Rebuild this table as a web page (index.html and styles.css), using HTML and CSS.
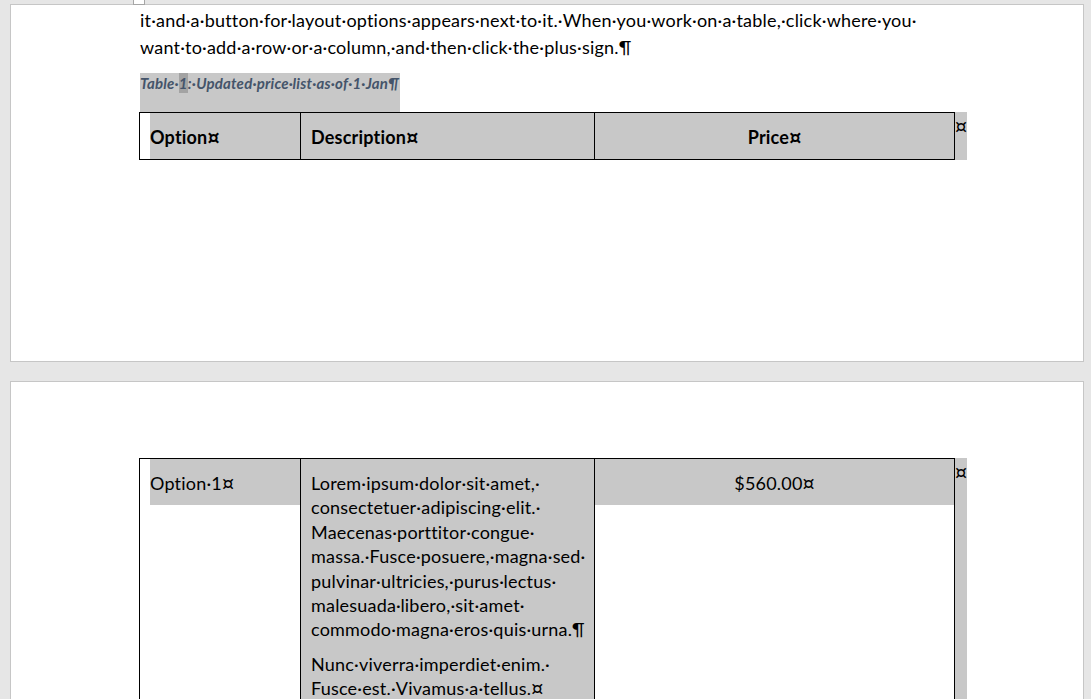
FILE: index.html
```html
<!DOCTYPE html>
<html lang="en">
<head>
<meta charset="utf-8">
<title>Document</title>
<link rel="stylesheet" href="styles.css">
</head>
<body>
<div class="crop-mark"></div>
<div class="page page-one">
  <p class="body-text">it·and·a·button·for·layout·options·appears·next·to·it.·When·you·work·on·a·table,·click·where·you·<br>want·to·add·a·row·or·a·column,·and·then·click·the·plus·sign.¶</p>
  <div class="caption">Table·<span class="field">1</span>:·Updated·price·list·as·of·1·Jan¶</div>
  <table class="price-table">
    <colgroup><col class="c1"><col class="c2"><col class="c3"><col class="c4"></colgroup>
    <tr class="head">
      <td class="cell-opt"><p class="sel">Option<span class="cm">¤</span></p></td>
      <td class="cell-desc"><p>Description<span class="cm">¤</span></p></td>
      <td class="cell-price"><p class="sel">Price<span class="cm">¤</span></p></td>
      <td class="row-end"><span class="cm">¤</span></td>
    </tr>
  </table>
</div>
<div class="page page-two">
  <table class="price-table">
    <colgroup><col class="c1"><col class="c2"><col class="c3"><col class="c4"></colgroup>
    <tr>
      <td class="cell-opt"><p class="sel">Option·1<span class="cm">¤</span></p></td>
      <td class="cell-desc">
        <p>Lorem·ipsum·dolor·sit·amet,·<br>consectetuer·adipiscing·elit.·<br>Maecenas·porttitor·congue·<br>massa.·Fusce·posuere,·magna·sed·<br>pulvinar·ultricies,·purus·lectus·<br>malesuada·libero,·sit·amet·<br>commodo·magna·eros·quis·urna.¶</p>
        <p>Nunc·viverra·imperdiet·enim.·<br>Fusce·est.·Vivamus·a·tellus.<span class="cm">¤</span></p>
      </td>
      <td class="cell-price"><p class="sel">$560.00<span class="cm">¤</span></p></td>
      <td class="row-end"><span class="cm">¤</span></td>
    </tr>
  </table>
</div>
</body>
</html>
```

FILE: styles.css
```css
html, body {
  margin: 0;
  height: 100%;
  overflow: hidden;
}
body {
  background: #e6e6e6;
  padding-top: 4px;
  box-sizing: border-box;
  font-family: Lato, "Open Sans", sans-serif;
  color: #000;
  position: relative;
}
.crop-mark {
  position: absolute;
  left: 133px;
  top: -1px;
  width: 12px;
  height: 6px;
  border: 1px solid #a6a6a6;
  background: #fff;
  box-sizing: border-box;
}
.page {
  margin-left: 10px;
  width: 1074px;
  background: #fff;
  border: 1px solid #c6c6c6;
  box-sizing: border-box;
  padding-left: 129px;
}
.page-one {
  height: 358px;
  padding-top: 2px;
}
.page-two {
  margin-top: 19px;
  height: 420px;
  padding-top: 76px;
}
.body-text {
  margin: 0;
  font-size: 18px;
  letter-spacing: 0.2px;
  line-height: 26.7px;
  white-space: nowrap;
}
.caption {
  margin-top: 13px;
  width: 260px;
  height: 39px;
  box-sizing: border-box;
  background: #c8c8c8;
  color: #44546a;
  font-weight: 700;
  font-style: italic;
  font-size: 15px;
  letter-spacing: 0.2px;
  line-height: 18px;
  white-space: nowrap;
}
.field {
  background: #a3a3a3;
  display: inline-block;
  line-height: 20px;
}
.cm {
  font-family: "DejaVu Sans", sans-serif;
  font-size: 19px;
  line-height: 1;
  font-weight: 400;
  letter-spacing: 0;
}
.head .cm {
  font-weight: 700;
}
.price-table {
  margin-left: -1px;
  border-collapse: separate;
  border-spacing: 0;
  table-layout: fixed;
  width: 828px;
  font-size: 18px;
  letter-spacing: 0.2px;
  line-height: 24.4px;
}
.c1 { width: 161px; }
.c2 { width: 294px; }
.c3 { width: 361px; }
.c4 { width: 12px; }
.price-table td {
  padding: 0;
  vertical-align: top;
  border-top: 1px solid #000;
  border-left: 1px solid #000;
  box-sizing: border-box;
}
.head td {
  border-bottom: 1px solid #000;
}
.price-table td.cell-price {
  border-right: 1px solid #000;
}
.price-table td.row-end {
  border: 0;
  background: #c8c8c8;
  line-height: 18px;
  padding: 5px 0 0 0;
}
.head .row-end .cm {
  font-weight: 400;
}
.price-table p {
  margin: 0;
  padding: 12px 10px 9.5px;
  white-space: nowrap;
}
.sel {
  background: #c8c8c8;
}
.cell-opt .sel {
  margin-left: 10px;
  padding-left: 0;
}
.cell-desc {
  background: #c8c8c8;
}
.cell-desc p + p {
  padding-top: 0;
}
.cell-desc p {
  padding-bottom: 10px;
}
.cell-price p {
  text-align: center;
}
.head p {
  font-weight: 700;
}
.head .cell-desc p {
  padding-bottom: 9.5px;
}
```
